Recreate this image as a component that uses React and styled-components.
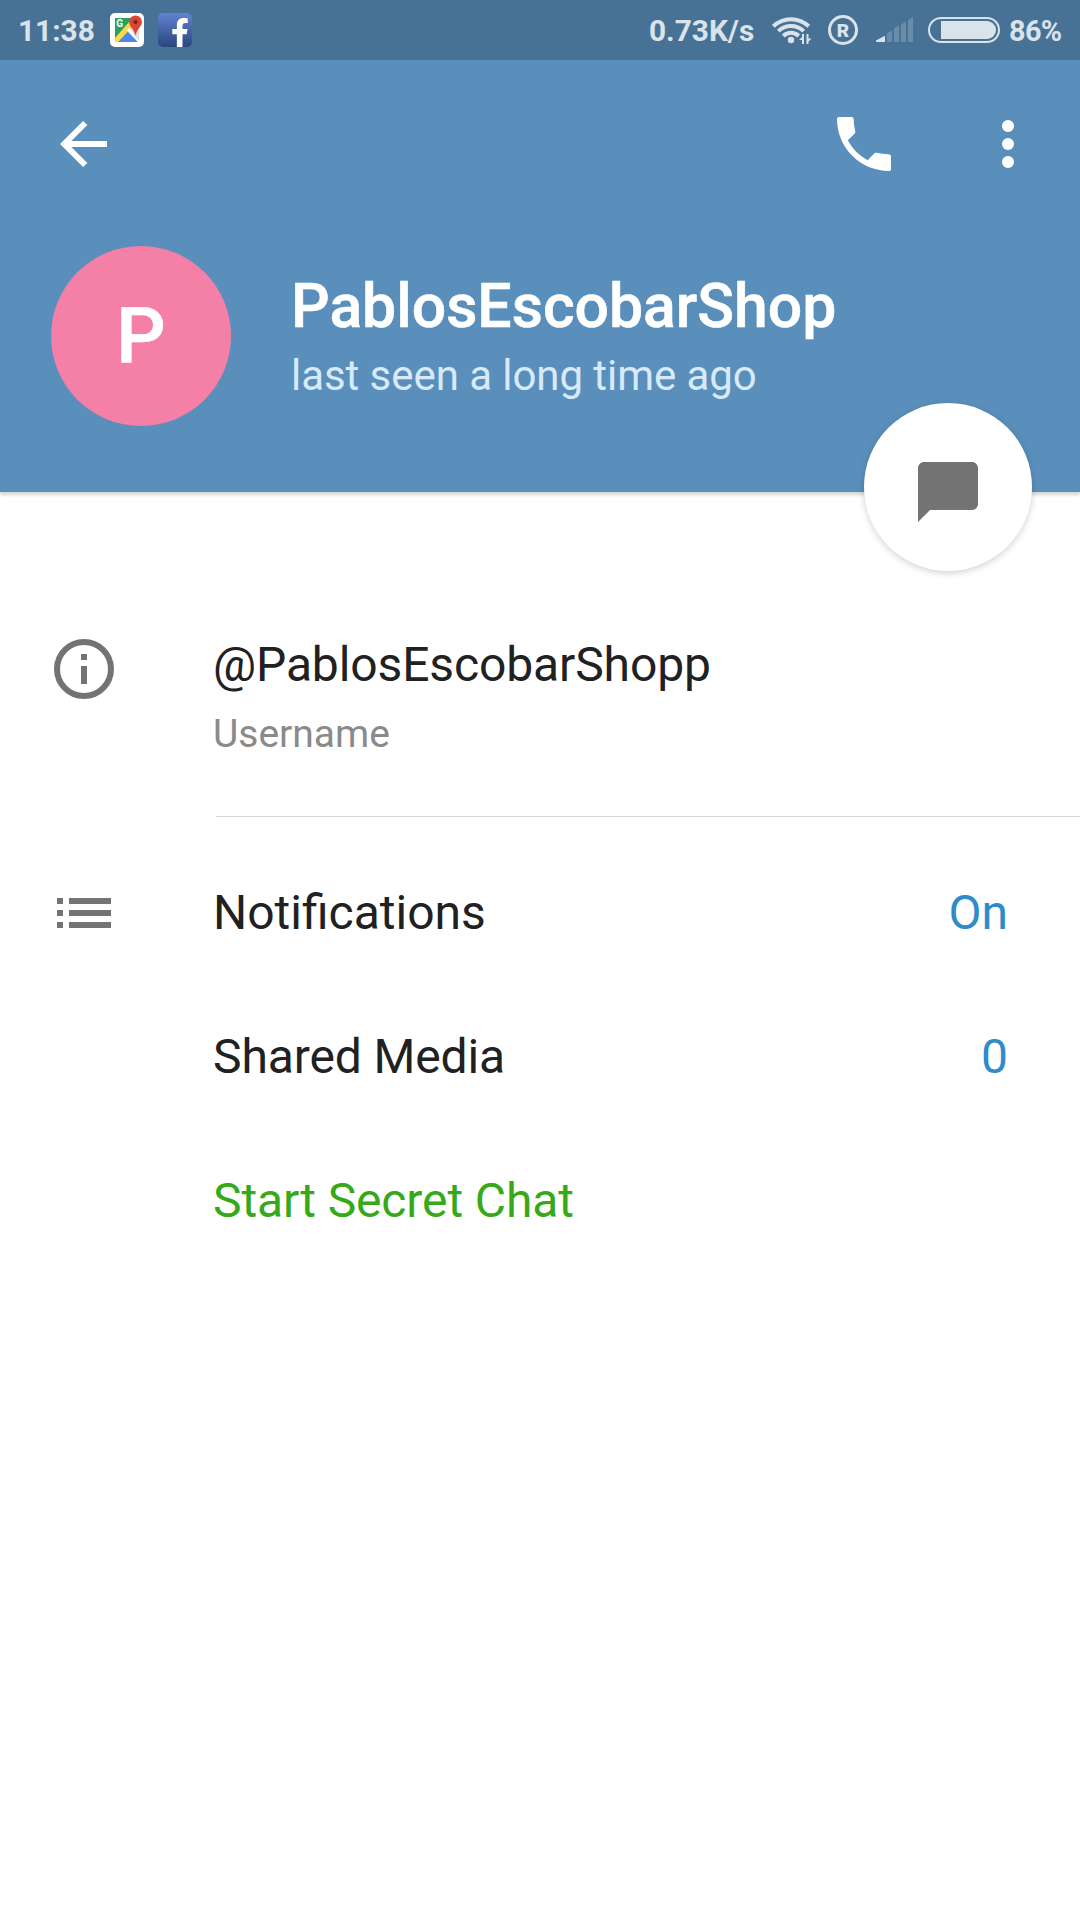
import React from 'react';
import styled, { createGlobalStyle } from 'styled-components';
import { FaFacebookF } from 'react-icons/fa';

const MapsIcon = () => (
  <svg width="34" height="34" viewBox="0 0 34 34">
    <rect width="34" height="34" rx="5" fill="#fff" />
    <path d="M5 5h24v24H5z" fill="#dcdcdc" />
    <path d="M5 5h18L5 26z" fill="#25a35c" />
    <path d="M8 29l9-11 11 11z" fill="#4a87f0" />
    <path d="M5 29v-4L20 8l4 4L8 29z" fill="#fbd94b" />
    <path d="M17 17l11 12h2L19 15z" fill="#fff" />
    <path
      d="M25.5 2.5a6.4 6.4 0 0 0-6.4 6.4c0 5 5 6 6.4 14 1.4-8 6.4-9 6.4-14a6.4 6.4 0 0 0-6.4-6.4z"
      fill="#db4437"
    />
    <circle cx="25.5" cy="9" r="2.1" fill="#7b231c" />
    <text x="6.3" y="14" fontSize="10" fontWeight="700" fill="#fff">
      G
    </text>
  </svg>
);

const WifiIcon = () => (
  <svg width="42" height="32" viewBox="770 14 42 32">
    <g fill="none" stroke="#dae3ea" strokeWidth="4">
      <path d="M773.3 26.3a25.5 25.5 0 0 1 35.4 0" />
      <path d="M778.3 31.2a18 18 0 0 1 25.4 0" />
      <path d="M783.3 36a11 11 0 0 1 15.4 0" />
    </g>
    <circle cx="791" cy="40" r="3.2" fill="#dae3ea" />
    <path
      d="M804 34v10h-2v-4h-3l3-3v-3zM806.5 34h2v4.500h3l-3 3V44h-2z"
      fill="#dae3ea"
    />
  </svg>
);

const SignalIcon = () => (
  <svg width="37" height="26" viewBox="876 18 37 26">
    <path d="M876 41.5l9-4.8V43h-9z" fill="#dae3ea" />
    <path
      d="M887 34.5l5-3V43h-5zM894 29.5l5-3V43h-5zM901 25.5l5-3V43h-5zM908 21l5-3V43h-5z"
      fill="#6a8cab"
    />
  </svg>
);

const BackIcon = () => (
  <svg width="48" height="48" viewBox="0 0 48 48" fill="none" stroke="#fff" strokeWidth="6">
    <path d="M47 24H6M25.2 3L4.2 24l21 21" />
  </svg>
);

const PhoneIcon = () => (
  <svg width="54" height="54" viewBox="3 3 18 18" fill="#fff">
    <path d="M6.62 10.79c1.44 2.83 3.76 5.14 6.59 6.59l2.2-2.2c.27-.27.5-.3.85-.24 1.3.24 2.5.4 3.74.45.55 0 1 .25 1 .8V20.3c0 .45-.25.7-.7.7C10.9 21 3 13.39 3 3.7 3 3.25 3.25 3 3.7 3H7.8c.55 0 .7.25.75.8.05 1.45.25 2.55.5 3.77.11.45.03.74-.23 1.02l-2.2 2.2z" />
  </svg>
);

const MoreIcon = () => (
  <svg width="12" height="48" viewBox="0 0 12 48" fill="#fff">
    <circle cx="6" cy="6" r="6" />
    <circle cx="6" cy="24" r="6" />
    <circle cx="6" cy="42" r="6" />
  </svg>
);

const ChatIcon = () => (
  <svg width="60" height="60" viewBox="2 2 20 20" fill="#737373">
    <path d="M20 2H4c-1.1 0-1.99.9-1.99 2L2 22l4-4h14c1.1 0 2-.9 2-2V4c0-1.1-.9-2-2-2z" />
  </svg>
);

const InfoIcon = () => (
  <svg width="60" height="60" viewBox="0 0 60 60" fill="#737373">
    <circle cx="30" cy="30" r="27" fill="none" stroke="#737373" strokeWidth="6" />
    <path d="M27 15h6v6h-6zM27 27h6v18h-6z" />
  </svg>
);

const ListIcon = () => (
  <svg width="54" height="30" viewBox="0 0 54 30" fill="#737373">
    <path d="M0 0h6v6H0zM12 0h42v6H12zM0 12h6v6H0zM12 12h42v6H12zM0 24h6v6H0zM12 24h42v6H12z" />
  </svg>
);

export default function App() {
  return (
    <Screen>
      <GlobalStyle />
      <StatusBar>
        <Clock>11:38</Clock>
        <MapsIcon />
        <FacebookBadge>
          <FaFacebookF />
        </FacebookBadge>
        <Speed>0.73K/s</Speed>
        <WifiIcon />
        <Roaming>R</Roaming>
        <SignalIcon />
        <Battery>
          <Charge />
        </Battery>
        <Percent>86%</Percent>
      </StatusBar>

      <Header>
        <Toolbar>
          <BackIcon />
          <Actions>
            <PhoneIcon />
            <MoreIcon />
          </Actions>
        </Toolbar>
        <Profile>
          <Avatar>P</Avatar>
          <ProfileText>
            <Name>PablosEscobarShop</Name>
            <LastSeen>last seen a long time ago</LastSeen>
          </ProfileText>
        </Profile>
        <ChatButton>
          <ChatIcon />
        </ChatButton>
      </Header>

      <InfoRow>
        <IconCell $left={54}>
          <InfoIcon />
        </IconCell>
        <InfoText>
          <Username>@PablosEscobarShopp</Username>
          <Caption>Username</Caption>
        </InfoText>
      </InfoRow>

      <Settings>
        <Row>
          <IconCell $left={57}>
            <ListIcon />
          </IconCell>
          <Label>Notifications</Label>
          <Value>On</Value>
        </Row>
        <Row>
          <IconCell />
          <Label $spacing="-0.12px">Shared Media</Label>
          <Value>0</Value>
        </Row>
        <Row>
          <IconCell />
          <Label $color="#37a919" $spacing="-0.12px">
            Start Secret Chat
          </Label>
        </Row>
      </Settings>
    </Screen>
  );
}

const GlobalStyle = createGlobalStyle`
  body {
    margin: 0;
    background: #fff;
  }

  svg {
    display: block;
    flex-shrink: 0;
  }
`;

const Screen = styled.div`
  width: 1080px;
  height: 1920px;
  overflow: hidden;
  background: #fff;
  font-family: Roboto, 'Liberation Sans', sans-serif;
  color: #212121;
`;

const StatusBar = styled.div`
  display: flex;
  align-items: center;
  box-sizing: border-box;
  height: 60px;
  padding-left: 18px;
  background: #477296;
  color: #dae3ea;
  font-size: 29.8px;
  font-weight: 700;
  line-height: 60px;
  white-space: nowrap;
`;

const Clock = styled.span`
  width: 92px;
  padding-top: 2px;
`;

const FacebookBadge = styled.span`
  display: flex;
  align-items: flex-end;
  justify-content: flex-end;
  box-sizing: border-box;
  width: 34px;
  height: 34px;
  margin-left: 14px;
  padding-right: 3px;
  overflow: hidden;
  border-radius: 5px;
  background: linear-gradient(#6084cf, #2a467f);
  color: #fff;

  svg {
    width: 18px;
    height: 29px;
  }
`;

const Speed = styled.span`
  width: 121px;
  margin-left: 457px;
  padding-top: 2px;
`;

const Roaming = styled.span`
  display: flex;
  align-items: center;
  justify-content: center;
  box-sizing: border-box;
  width: 30px;
  height: 30px;
  margin: 0 18px 0 16px;
  border: 3px solid #dae3ea;
  border-radius: 50%;
  font-size: 19px;
  font-weight: 900;
  line-height: 1;
`;

const Battery = styled.span`
  display: flex;
  justify-content: flex-end;
  box-sizing: border-box;
  width: 72px;
  height: 26px;
  margin: 0 9px 0 15px;
  padding: 2px;
  border: 2px solid #dae3ea;
  border-radius: 13px;
`;

const Charge = styled.span`
  width: 55px;
  height: 18px;
  border-radius: 0 9px 9px 0;
  background: #dae3ea;
`;

const Percent = styled.span`
  padding-top: 2px;
  font-size: 28.8px;
  letter-spacing: -0.6px;
`;

const Header = styled.header`
  position: relative;
  height: 432px;
  background: #5a8fbb;
  box-shadow: 0 3px 3px rgb(0 0 0 / 16%);
`;

const Toolbar = styled.div`
  display: flex;
  align-items: center;
  justify-content: space-between;
  height: 168px;
  padding: 0 66px 0 60px;
`;

const Actions = styled.div`
  display: flex;
  align-items: center;
  gap: 111px;
`;

const Profile = styled.div`
  display: flex;
  align-items: center;
  gap: 60px;
  padding: 18px 0 0 51px;
`;

const ProfileText = styled.div`
  padding-top: 7px;
`;

const Avatar = styled.div`
  width: 180px;
  height: 180px;
  border-radius: 50%;
  background: #f47fa7;
  color: #fff;
  font-size: 78px;
  font-weight: 500;
  line-height: 181px;
  text-align: center;
  -webkit-text-stroke: 0.6px #fff;
`;

const Name = styled.h1`
  margin: 0;
  color: #fff;
  font-size: 60.7px;
  font-weight: 500;
  line-height: 72px;
  -webkit-text-stroke: 0.6px #fff;
`;

const LastSeen = styled.p`
  margin: 0;
  color: #d7eafa;
  font-size: 42px;
  letter-spacing: -0.06px;
  line-height: 66px;
`;

const ChatButton = styled.button`
  position: absolute;
  right: 48px;
  bottom: -79px;
  display: flex;
  align-items: center;
  justify-content: center;
  width: 168px;
  height: 168px;
  padding: 10px 0 0;
  border: none;
  border-radius: 50%;
  background: #fff;
  box-shadow: 0 2px 7px rgb(0 0 0 / 18%);
`;

const InfoRow = styled.section`
  display: flex;
  height: 325px;
`;

const IconCell = styled.div`
  flex-shrink: 0;
  box-sizing: border-box;
  width: 213px;
  padding-left: ${({ $left }) => $left || 0}px;

  ${InfoRow} & {
    padding-top: 147px;
  }
`;

const InfoText = styled.div`
  flex: 1;
  margin-left: 3px;
  padding-top: 137px;
  border-bottom: 1px solid #d9d9d9;
`;

const Username = styled.p`
  margin: 0 0 0 -3px;
  font-size: 48px;
  letter-spacing: -0.12px;
  line-height: 72px;
`;

const Caption = styled.p`
  margin: 0 0 0 -3px;
  color: #8a8a8a;
  font-size: 39px;
  line-height: 66px;
`;

const Settings = styled.section`
  padding-top: 24px;
`;

const Row = styled.div`
  display: flex;
  align-items: center;
  height: 144px;
  padding-right: 72px;
  font-size: 48px;
  line-height: 56px;
`;

const Label = styled.span`
  flex: 1;
  color: ${({ $color }) => $color || '#212121'};
  letter-spacing: ${({ $spacing }) => $spacing || 'normal'};
`;

const Value = styled.span`
  color: #2f8cc9;
`;
